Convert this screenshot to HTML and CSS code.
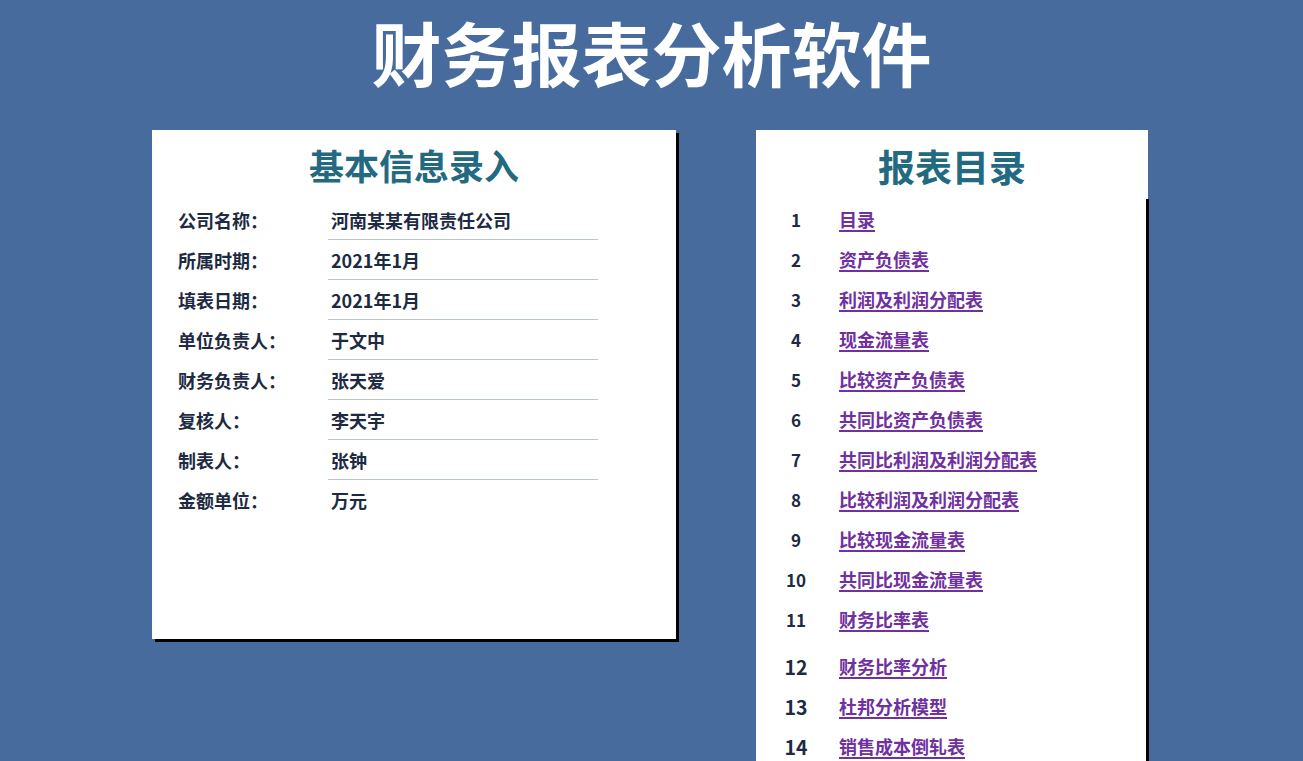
FILE: index.html
```html
<!DOCTYPE html>
<html lang="zh-CN">
<head>
<meta charset="utf-8">
<title>财务报表分析软件</title>
<link rel="stylesheet" href="styles.css">
</head>
<body>
<header class="app-title">财务报表分析软件</header>
<main class="panels">
  <section class="card info-card">
    <h2 class="card-title">基本信息录入</h2>
    <div class="info-rows">
      <div class="info-row"><span class="info-label">公司名称：</span><span class="info-value">河南某某有限责任公司</span></div>
      <div class="info-row"><span class="info-label">所属时期：</span><span class="info-value">2021年1月</span></div>
      <div class="info-row"><span class="info-label">填表日期：</span><span class="info-value">2021年1月</span></div>
      <div class="info-row"><span class="info-label">单位负责人：</span><span class="info-value">于文中</span></div>
      <div class="info-row"><span class="info-label">财务负责人：</span><span class="info-value">张天爱</span></div>
      <div class="info-row"><span class="info-label">复核人：</span><span class="info-value">李天宇</span></div>
      <div class="info-row"><span class="info-label">制表人：</span><span class="info-value">张钟</span></div>
      <div class="info-row last"><span class="info-label">金额单位：</span><span class="info-value">万元</span></div>
    </div>
  </section>
  <section class="card toc-card">
    <h2 class="card-title toc-title">报表目录</h2>
    <ol class="toc-list">
      <li class="toc-row"><span class="toc-num">1</span><a class="toc-link" href="#">目录</a></li>
      <li class="toc-row"><span class="toc-num">2</span><a class="toc-link" href="#">资产负债表</a></li>
      <li class="toc-row"><span class="toc-num">3</span><a class="toc-link" href="#">利润及利润分配表</a></li>
      <li class="toc-row"><span class="toc-num">4</span><a class="toc-link" href="#">现金流量表</a></li>
      <li class="toc-row"><span class="toc-num">5</span><a class="toc-link" href="#">比较资产负债表</a></li>
      <li class="toc-row"><span class="toc-num">6</span><a class="toc-link" href="#">共同比资产负债表</a></li>
      <li class="toc-row"><span class="toc-num">7</span><a class="toc-link" href="#">共同比利润及利润分配表</a></li>
      <li class="toc-row"><span class="toc-num">8</span><a class="toc-link" href="#">比较利润及利润分配表</a></li>
      <li class="toc-row"><span class="toc-num">9</span><a class="toc-link" href="#">比较现金流量表</a></li>
      <li class="toc-row"><span class="toc-num">10</span><a class="toc-link" href="#">共同比现金流量表</a></li>
      <li class="toc-row"><span class="toc-num">11</span><a class="toc-link" href="#">财务比率表</a></li>
      <li class="toc-row big gap"><span class="toc-num">12</span><a class="toc-link" href="#">财务比率分析</a></li>
      <li class="toc-row big"><span class="toc-num">13</span><a class="toc-link" href="#">杜邦分析模型</a></li>
      <li class="toc-row big"><span class="toc-num">14</span><a class="toc-link" href="#">销售成本倒轧表</a></li>
    </ol>
  </section>
</main>
</body>
</html>
```
FILE: styles.css
```css
html, body {
  margin: 0;
  padding: 0;
}
body {
  background: #476b9d;
  font-family: "Noto Sans CJK SC", "Noto Sans", sans-serif;
  width: 1303px;
  height: 761px;
  overflow: hidden;
}
.app-title {
  height: 130px;
  box-sizing: border-box;
  padding-top: 12px;
  text-align: center;
  color: #ffffff;
  font-size: 70px;
  font-weight: 700;
  line-height: 80px;
}
.panels {
  display: flex;
  align-items: flex-start;
  padding-left: 152px;
  gap: 80px;
}
.card {
  background: #ffffff;
  box-sizing: border-box;
}
.info-card {
  width: 524px;
  height: 509px;
  box-shadow: 3px 3px 0 #000000;
}
.card-title {
  margin: 0;
  height: 70px;
  line-height: 70px;
  text-align: center;
  color: #236a80;
  font-size: 35px;
  font-weight: 700;
}
.info-rows {
  padding-left: 26px;
}
.info-row {
  display: flex;
  height: 40px;
  align-items: center;
  font-size: 18px;
  font-weight: 700;
  color: #1d2a42;
}
.info-label {
  width: 150px;
}
.info-value {
  width: 270px;
  height: 40px;
  line-height: 40px;
  padding-left: 3px;
  border-bottom: 1px solid #b9c4da;
  box-sizing: border-box;
}
.info-row.last .info-value {
  border-bottom: none;
}
.toc-card {
  width: 392px;
  height: 631px;
}
.toc-title {
  font-size: 37px;
  height: 69px;
  line-height: 72px;
}
.toc-list {
  list-style: none;
  margin: 0;
  padding: 0;
  margin-right: -1px;
  border-right: 3px solid #000000;
  height: 562px;
  box-sizing: border-box;
}
.toc-row {
  display: flex;
  align-items: center;
  height: 40px;
}
.toc-row.gap {
  margin-top: 7px;
}
.toc-num {
  width: 80px;
  margin-right: 3px;
  text-align: center;
  font-size: 17px;
  font-weight: 700;
  color: #1d2a42;
}
.toc-row.big .toc-num {
  font-size: 19.5px;
}
.toc-link {
  font-size: 18px;
  font-weight: 700;
  color: #7030a0;
  text-decoration: underline;
  text-underline-offset: 3px;
  text-decoration-thickness: 1.5px;
}
```
